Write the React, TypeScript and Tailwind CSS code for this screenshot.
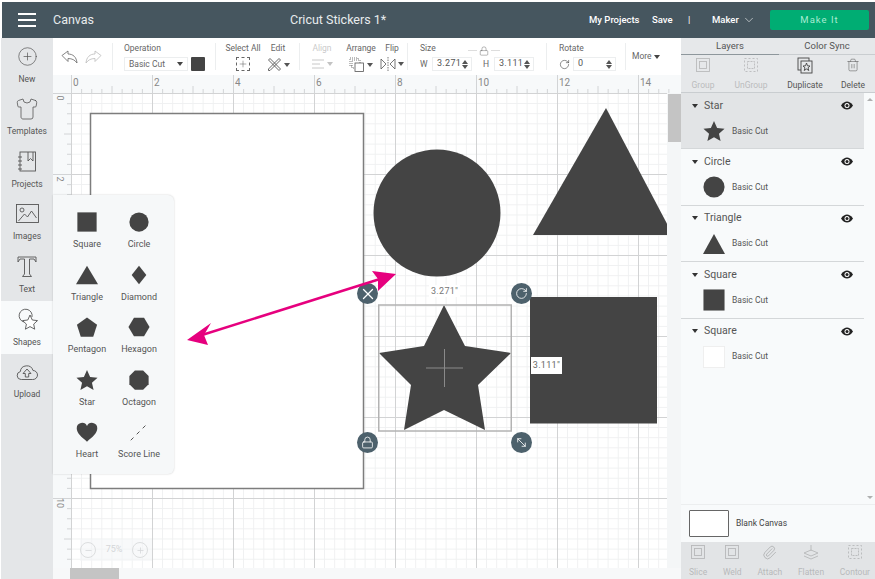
import { ChevronDown, CirclePlus, Paperclip, RotateCw, Trash2, X, Lock, MoveDiagonal2, Plus, Minus, Shirt } from 'lucide-react';
import type { ReactNode } from 'react';

const FONT = "font-['Roboto',sans-serif]";
const INK = '#444444';

function Glyph({ children, size = 22, fill = INK }: { children: ReactNode; size?: number; fill?: string }) {
  return (
    <svg width={size} height={size} viewBox="0 0 24 24" fill={fill}>
      {children}
    </svg>
  );
}

const STAR = '12,1 15.4,8.6 23.5,9.6 17.4,15 19.2,23 12,18.8 4.8,23 6.6,15 .5,9.6 8.6,8.6';

// Flyout shapes, in the order of the reference
const SHAPES: { label: string; art: ReactNode }[] = [
  { label: 'Square', art: <rect x="1.5" y="1.5" width="21" height="21" /> },
  { label: 'Circle', art: <circle cx="12" cy="12" r="10.5" /> },
  { label: 'Triangle', art: <polygon points="12,2 24,22 0,22" /> },
  { label: 'Diamond', art: <polygon points="12,2 20,12 12,22 4,12" /> },
  { label: 'Pentagon', art: <polygon points="12,1.5 23,9.5 18.8,22.5 5.2,22.5 1,9.5" /> },
  { label: 'Hexagon', art: <polygon points="6.5,2 17.5,2 23.5,12 17.5,22 6.5,22 .5,12" /> },
  { label: 'Star', art: <polygon points={STAR} /> },
  { label: 'Octagon', art: <polygon points="7.5,1.5 16.5,1.5 22.5,7.5 22.5,16.5 16.5,22.5 7.5,22.5 1.5,16.5 1.5,7.5" /> },
  { label: 'Heart', art: <path d="M12 22.5C6 17.5 .8 13.6.8 8A5.9 5.9 0 0 1 12 5.4 5.9 5.9 0 0 1 23.2 8c0 5.6-5.2 9.5-11.2 14.5z" /> },
  { label: 'Score Line', art: <path d="M3 21l3-3M9.5 14.5l3-3M16 8l3-3" stroke={INK} strokeWidth="1" fill="none" /> },
];

const LAYERS: { name: string; selected?: boolean; thumb: ReactNode }[] = [
  { name: 'Star', selected: true, thumb: <polygon points={STAR} /> },
  { name: 'Circle', thumb: <circle cx="12" cy="12" r="11.5" /> },
  { name: 'Triangle', thumb: <polygon points="12,1 24,23 0,23" /> },
  { name: 'Square', thumb: <rect x=".5" y=".5" width="23" height="23" /> },
  { name: 'Square', thumb: <rect x=".5" y=".5" width="23" height="23" fill="#ffffff" stroke="#eeeeee" /> },
];

function ProjectsIcon() {
  return (
    <svg width="20" height="22" viewBox="0 0 20 22" fill="none" stroke="#555" strokeWidth="0.9">
      <rect x="3" y="1" width="15.5" height="19" />
      <path d="M1 6h4M1 10h4M1 14h4M1 18h4M11 1v9l2.5-2.5L16 10V1" />
    </svg>
  );
}

function ImagesIcon() {
  return (
    <svg width="23" height="20" viewBox="0 0 23 20" fill="none" stroke="#555" strokeWidth="0.9">
      <rect x=".5" y=".5" width="22" height="18" />
      <circle cx="6" cy="6" r="2" />
      <path d="M2.500 17l6-7 3 3 4-6 5 7" />
    </svg>
  );
}

function TextIcon() {
  return (
    <svg width="20" height="22" viewBox="0 0 20 22" fill="none" stroke="#555" strokeWidth="0.9">
      <path d="M1 1h18v5l-2-3h-4.5v15l2 2.5h-9l2-2.5V3H3L1 6z" />
    </svg>
  );
}

function ShapesIcon() {
  return (
    <svg width="24" height="24" viewBox="0 0 24 24" fill="none" stroke="#555" strokeWidth="0.9">
      <path d="M9 14a6.5 6.5 0 1 1 8-5" />
      <path d="M15 7l2.300 5 5.200.6-3.800 3.500 1 5.100-4.700-2.600-4.600 2.600 1-5.100-3.800-3.500 5.200-.6z" fill="#fff" />
    </svg>
  );
}

function UploadIcon() {
  return (
    <svg width="22" height="17" viewBox="0 0 22 17" fill="none" stroke="#555" strokeWidth="0.9">
      <path d="M5.500 15.500H5a4 4 0 0 1-.7-7.900A6.500 6.500 0 0 1 17 6.500a4.500 4.500 0 0 1 0 9h-.5z" />
      <path d="M11 5l4 4.500h-2.300V13H9.300V9.500H7z" />
    </svg>
  );
}

const SIDEBAR: { label: string; icon: ReactNode; active?: boolean }[] = [
  { label: 'New', icon: <CirclePlus size={21} strokeWidth={0.8} color="#555" /> },
  { label: 'Templates', icon: <Shirt size={24} strokeWidth={0.8} color="#555" /> },
  { label: 'Projects', icon: <ProjectsIcon /> },
  { label: 'Images', icon: <ImagesIcon /> },
  { label: 'Text', icon: <TextIcon /> },
  { label: 'Shapes', icon: <ShapesIcon />, active: true },
  { label: 'Upload', icon: <UploadIcon /> },
];

function Sidebar() {
  return (
    <div className="w-[52px] ml-px shrink-0 bg-[#e4e6e8] flex flex-col">
      {SIDEBAR.map((item) => (
        <div
          key={item.label}
          className={`h-[52.6px] shrink-0 flex flex-col items-center justify-end pb-[6px] ${item.active ? 'bg-[#f8fafb]' : ''}`}
        >
          <div className="h-[26px] flex items-center justify-center">{item.icon}</div>
          <span className="text-[8.5px] leading-[12px] mt-[3px] text-[#555]">{item.label}</span>
        </div>
      ))}
    </div>
  );
}

function Header() {
  return (
    <div className="h-[36px] ml-[2px] bg-[#46565f] flex items-center text-white shrink-0 whitespace-nowrap">
      <div className="w-[18px] ml-[16px] flex flex-col gap-[4px]">
        <div className="h-[2px] bg-white" />
        <div className="h-[2px] bg-white" />
        <div className="h-[2px] bg-white" />
      </div>
      <span className="ml-[17px] w-[237px] text-[12.5px] text-[#e8ecee]">Canvas</span>
      <span className="w-[299px] text-[12.5px] text-[#e8ecee]">Cricut Stickers 1*</span>
      <span className="w-[63px] text-[9.5px] font-medium">My Projects</span>
      <span className="w-[36px] text-[9.5px] font-medium">Save</span>
      <span className="w-[24px] text-[9.5px]">|</span>
      <span className="w-[30px] text-[9.5px] font-medium">Maker</span>
      <span className="w-[28px]"><ChevronDown size={14} strokeWidth={1} /></span>
      <div className="w-[99px] h-[20px] rounded-[2px] bg-[#00ad73] flex items-center justify-center text-[9.5px] tracking-[1px] text-[#a8ecd2]">
        Make It
      </div>
    </div>
  );
}

function Caret({ color = '#555' }: { color?: string }) {
  return <span className="inline-block border-x-[3px] border-x-transparent border-t-[4px] ml-[2px]" style={{ borderTopColor: color }} />;
}

function Stepper() {
  return (
    <span className="flex flex-col gap-[1px] ml-auto mr-[3px]">
      <span className="border-x-[3px] border-x-transparent border-b-[4px] border-b-[#555]" />
      <span className="border-x-[3px] border-x-transparent border-t-[4px] border-t-[#555]" />
    </span>
  );
}

function Tool({ label, faded, width, children }: { label: string; faded?: boolean; width: string; children: ReactNode }) {
  return (
    <div className={`flex flex-col items-center ${width} ${faded ? 'opacity-35' : ''}`}>
      <span className="text-[8.5px] leading-[12px] -mt-[1px] text-[#666] whitespace-nowrap">{label}</span>
      <div className="h-[18px] mt-[3px] flex items-center">{children}</div>
    </div>
  );
}

function NumberField({ value, width }: { value: string; width: string }) {
  return (
    <div className={`${width} h-[14px] border border-[#eceeef] flex items-center pl-[4px] text-[9px] tracking-[.3px] text-[#555]`}>
      {value}
      <Stepper />
    </div>
  );
}

function Toolbar() {
  return (
    <div className="h-[37px] bg-white flex shrink-0 text-[#666]">
      <div className="w-[60px] my-[5px] border-r border-[#eceeef] flex items-center gap-[7px] pl-[8px]">
        <svg width="17" height="14" viewBox="0 0 17 14" fill="none" stroke="#666" strokeWidth="0.8">
          <path d="M1 5.5L7 1v3c5 0 8.5 3 9 9-2-3-5-4.5-9-4.5v3z" />
        </svg>
        <svg width="17" height="14" viewBox="0 0 17 14" fill="none" stroke="#bbb" strokeWidth="0.8">
          <path d="M16 5.5L10 1v3C5 4 1.5 7 1 13c2-3 5-4.5 9-4.5v3z" />
        </svg>
      </div>
      <div className="w-[103px] my-[5px] border-r border-[#eceeef] pl-[11px]">
        <div className="text-[8.5px] leading-[12px] -mt-[1px]">Operation</div>
        <div className="flex gap-[3px] mt-[3px]">
          <div className="w-[64px] h-[14px] border border-[#eceeef] flex items-center justify-between px-[4px] text-[8.5px]">
            Basic Cut
            <Caret color="#444" />
          </div>
          <div className="w-[14px] h-[14px] bg-[#444] rounded-[1px]" />
        </div>
      </div>
      <div className="w-[84px] my-[5px] border-r border-[#eceeef] flex pl-[9px]">
        <Tool label="Select All" width="w-[36px]">
          <div className="w-[14px] h-[14px] border border-dashed border-[#666] flex items-center justify-center text-[#555]">
            <Plus size={10} strokeWidth={1.2} />
          </div>
        </Tool>
        <Tool label="Edit" width="w-[34px]">
          <svg width="15" height="15" viewBox="0 0 15 15" fill="none" stroke="#555" strokeWidth="0.9">
            <path d="M3 1.500l10.500 10.500-1.500 1.500L1.500 3zM12 1.500L13.500 3 3 13.500H1.500V12z" />
          </svg>
          <Caret />
        </Tool>
      </div>
      <div className="w-[108px] my-[5px] border-r border-[#eceeef] flex pl-[2px]">
        <Tool label="Align" faded width="w-[40px]">
          <svg width="14" height="12" viewBox="0 0 14 12" stroke="#666" strokeWidth="1">
            <path d="M1 2h12M1 6h8M1 10h12" />
          </svg>
          <Caret />
        </Tool>
        <Tool label="Arrange" width="w-[38px]">
          <svg width="16" height="15" viewBox="0 0 16 15" fill="#fff" stroke="#555" strokeWidth="0.8">
            <rect x="1" y="1" width="8" height="8" strokeDasharray="1 1" />
            <rect x="3" y="3" width="8" height="8" strokeDasharray="1 1" />
            <rect x="6" y="6" width="8.5" height="8.5" />
          </svg>
          <Caret />
        </Tool>
        <Tool label="Flip" width="w-[24px]">
          <svg width="16" height="14" viewBox="0 0 16 14" fill="none" stroke="#555" strokeWidth="0.8">
            <path d="M1 2l5 5-5 5zM15 2l-5 5 5 5z" />
            <path d="M8 0v14" strokeDasharray="1.5 1" />
          </svg>
          <Caret />
        </Tool>
      </div>
      <div className="w-[139px] my-[5px] border-r border-[#eceeef] pl-[4px] relative">
        <div className="text-[8.5px] leading-[12px] -mt-[1px] pl-[8px]">Size</div>
        <Lock size={10} strokeWidth={1} color="#555" className="absolute left-[71px] top-[3px]" />
        <div className="absolute left-[60px] top-[7px] w-[9px] h-[1px] bg-[#ddd]" />
        <div className="absolute left-[83px] top-[7px] w-[9px] h-[1px] bg-[#ddd]" />
        <div className="flex items-center mt-[3px] text-[8.5px]">
          <span className="ml-[8px] w-[12px]">W</span>
          <NumberField value="3.271" width="w-[40px]" />
          <span className="ml-[11px] w-[11px]">H</span>
          <NumberField value="3.111" width="w-[40px]" />
        </div>
      </div>
      <div className="w-[79px] my-[5px] border-r border-[#eceeef] pl-[12px]">
        <div className="text-[8.5px] leading-[12px] -mt-[1px]">Rotate</div>
        <div className="flex items-center gap-[3px] mt-[3px]">
          <RotateCw size={11} strokeWidth={1.2} color="#333" />
          <NumberField value="0" width="w-[43px]" />
        </div>
      </div>
      <div className="flex-1 flex items-center pl-[6px] text-[8.5px]">
        More
        <Caret color="#444" />
      </div>
    </div>
  );
}

const COLUMN_MARKS = [0, 2, 4, 6, 8, 10, 12, 14];
const ROW_MARKS = [0, 2, 4, 6, 8, 10];

function TopRuler() {
  return (
    <div className="h-[18px] relative bg-[#f7f9fa] shrink-0 overflow-hidden">
      <svg className="absolute inset-0" width="628" height="18" stroke="#d2d4d6" strokeWidth="1">
        {Array.from({ length: 60 }, (_, i) => {
          const x = 18.5 + i * 10.125;
          const len = i % 8 === 0 ? 18 : i % 4 === 0 ? 7 : 4;
          return <line key={i} x1={x} x2={x} y1={18 - len} y2={18} />;
        })}
      </svg>
      {COLUMN_MARKS.map((n, i) => (
        <span key={n} className="absolute top-[2px] text-[10px] leading-[12px] text-[#888]" style={{ left: 20 + i * 81 }}>
          {n}
        </span>
      ))}
    </div>
  );
}

function LeftRuler() {
  return (
    <div className="w-[18px] relative bg-[#f7f9fa] shrink-0 overflow-hidden">
      <svg className="absolute inset-0" width="18" height="475" stroke="#d2d4d6" strokeWidth="1">
        {Array.from({ length: 48 }, (_, i) => {
          const y = 0.5 + i * 10.125;
          const len = i % 8 === 0 ? 18 : i % 4 === 0 ? 7 : 4;
          return <line key={i} y1={y} y2={y} x1={18 - len} x2={18} />;
        })}
      </svg>
      {ROW_MARKS.map((n, i) => (
        <span
          key={n}
          className="absolute left-[1px] w-[12px] h-[12px] text-center rotate-90 text-[9px] leading-[12px] text-[#888]"
          style={{ top: -1 + i * 81 }}
        >
          {n}
        </span>
      ))}
    </div>
  );
}

function Handle({ className, children }: { className: string; children: ReactNode }) {
  return (
    <div className={`absolute w-[21px] h-[21px] rounded-full bg-[#4d616c] flex items-center justify-center text-white ${className}`}>
      {children}
    </div>
  );
}

function CanvasArea() {
  return (
    <div className="flex-1 min-w-0 flex overflow-hidden">
      <LeftRuler />
      <div className="w-[596px] relative overflow-hidden bg-white bg-[linear-gradient(to_right,#d2d3d4_1px,transparent_1px),linear-gradient(to_bottom,#d2d3d4_1px,transparent_1px),linear-gradient(to_right,#eff0f1_1px,transparent_1px),linear-gradient(to_bottom,#eff0f1_1px,transparent_1px)] bg-[size:81px_81px,81px_81px,10.125px_10.125px,10.125px_10.125px]">
        <svg className="absolute inset-0" width="596" height="475" viewBox="71 93 596 475">
          <rect x="90.5" y="113.5" width="273" height="375" fill="#ffffff" stroke="#7d7d7d" strokeWidth="1.5" />
          <circle cx="437" cy="213" r="63.5" fill={INK} />
          <polygon points="606,108 673,235 533,235" fill={INK} />
          <rect x="530" y="297" width="127" height="126.5" fill={INK} />
          <polygon
            points="444,305 465,346 511,353 478,385 485,430 444,410 404,430 411,385 379,353 424,346"
            fill={INK}
          />
          <rect x="378.75" y="305" width="132.5" height="126" fill="none" stroke="#b3b3b3" strokeWidth="1.5" />
          <path d="M444.5 349v38M426 368h37" stroke="#8a8a8a" strokeWidth="1" />
        </svg>
        <div className="absolute left-[358px] top-[192px] text-[9px] leading-[12px] tracking-[.3px] bg-white px-[2px] text-[#777]">3.271"</div>
        <div className="absolute left-[460px] top-[264px] w-[31px] h-[17px] bg-white flex items-center justify-center text-[9px] tracking-[.3px] text-[#666]">3.111"</div>
        <Handle className="left-[286px] top-[190px]"><X size={18} strokeWidth={1.7} /></Handle>
        <Handle className="left-[440px] top-[190px]"><RotateCw size={13} strokeWidth={1.5} /></Handle>
        <Handle className="left-[286px] top-[339px]"><Lock size={13} strokeWidth={1.5} /></Handle>
        <Handle className="left-[440px] top-[339px]"><MoveDiagonal2 size={13} strokeWidth={1.5} /></Handle>
        <div className="absolute left-[9px] top-[446px] w-[72px] h-[22px] flex items-center gap-[3px] bg-[#f4f5f6]/60 text-[#d4d6d8]">
          <span className="w-[16px] h-[16px] rounded-full border border-[#dcdedf] flex items-center justify-center"><Minus size={9} /></span>
          <span className="text-[9px] w-[30px] text-center">75%</span>
          <span className="w-[16px] h-[16px] rounded-full border border-[#dcdedf] flex items-center justify-center"><Plus size={9} /></span>
        </div>
      </div>
      <div className="flex-1 bg-[#f4f6f7]">
        <div className="w-[13px] ml-px h-[48px] mt-[1px] bg-[#c4c4c4]" />
      </div>
    </div>
  );
}

function ShapesFlyout() {
  return (
    <div className="absolute left-[53px] top-[195px] w-[121px] h-[279px] rounded-r-[6px] bg-[#f6f8f9] shadow-[0_0_2px_rgba(0,0,0,.2)] grid grid-cols-[52px_52px] auto-rows-[52.5px] pl-[8px] pt-[16px]">
      {SHAPES.map((shape) => (
        <div key={shape.label} className="flex flex-col items-center">
          <Glyph>{shape.art}</Glyph>
          <span className="mt-[5px] text-[9px] leading-[12px] text-[#555] whitespace-nowrap">{shape.label}</span>
        </div>
      ))}
    </div>
  );
}

function Eye() {
  return (
    <svg width="12" height="9" viewBox="0 0 12 9">
      <path d="M0 4.5C2 1.5 4 .5 6 .5s4 1 6 4c-2 3-4 4-6 4s-4-1-6-4z" fill="#222" />
      <circle cx="6" cy="4.5" r="2.5" fill="#fff" />
      <circle cx="6" cy="4.5" r="1.5" fill="#222" />
    </svg>
  );
}

function LayerRow({ name, selected, last, thumb }: { name: string; selected?: boolean; last?: boolean; thumb: ReactNode }) {
  return (
    <div className={`h-[56.4px] shrink-0 pl-[9px] ${last ? '' : 'border-b border-[#d4d7d9]'} ${selected ? 'bg-[#e2e4e6]' : 'bg-[#f8fafb]'}`}>
      <div className="flex items-center h-[23px] pt-[2px]">
        <Caret color="#333" />
        <span className="ml-[6px] text-[10.5px] text-[#555]">{name}</span>
        <span className="ml-auto mr-[11px]"><Eye /></span>
      </div>
      <div className="flex items-center pl-[13px] mt-[4px]">
        <Glyph>{thumb}</Glyph>
        <span className="ml-[7px] text-[8.5px] text-[#555]">Basic Cut</span>
      </div>
    </div>
  );
}

function PanelTool({ label, faded, children, className = '' }: { label: string; faded?: boolean; children: ReactNode; className?: string }) {
  return (
    <div className={`flex flex-col items-center ${faded ? 'opacity-30' : ''} ${className}`}>
      <div className="h-[18px] flex items-center">{children}</div>
      <span className="mt-[6px] text-[8.5px] leading-[11px] text-[#555]">{label}</span>
    </div>
  );
}

function IconSquare({ dashed }: { dashed?: boolean }) {
  return (
    <svg width="16" height="16" viewBox="0 0 16 16" fill="none" stroke="#555" strokeWidth="0.9">
      <rect x="1.5" y="1.5" width="13" height="13" strokeDasharray={dashed ? '2 2' : undefined} />
      <rect x="4.5" y="4.5" width="7" height="7" strokeDasharray={dashed ? '2 1' : undefined} />
    </svg>
  );
}

function DuplicateIcon() {
  return (
    <svg width="16" height="17" viewBox="0 0 16 17" fill="none" stroke="#444" strokeWidth="0.9">
      <rect x="1" y="1" width="11" height="12" />
      <rect x="4" y="4" width="11" height="12" fill="#e6e8ea" />
      <polygon points="9.5,6 10.5,8.8 13,9 11,10.8 11.8,13.5 9.5,12 7.2,13.5 8,10.8 6,9 8.5,8.8" />
    </svg>
  );
}

function RightPanel() {
  return (
    <div className="flex-1 min-w-0 flex flex-col bg-[#f8fafb]">
      <div className="flex h-[17px] shrink-0 bg-[#e6e8ea] text-[9.5px] text-[#555] border-b border-[#c9cdd0]">
        <div className="w-[98px] flex items-center justify-center border-b border-[#8e979c] h-[17px]">Layers</div>
        <div className="flex-1 flex items-center justify-center">Color Sync</div>
      </div>
      <div className="h-[38px] shrink-0 bg-[#e6e8ea] flex pt-[1px] border-b border-[#c9cdd0]">
        <PanelTool label="Group" faded className="w-[44px]"><IconSquare /></PanelTool>
        <PanelTool label="UnGroup" faded className="w-[52px]"><IconSquare dashed /></PanelTool>
        <PanelTool label="Duplicate" className="w-[56px]"><DuplicateIcon /></PanelTool>
        <PanelTool label="Delete" className="w-[40px]"><Trash2 size={14} strokeWidth={0.9} color="#555" /></PanelTool>
      </div>
      <div className="flex-1 min-h-0 flex border-b border-[#eceeef]">
        <div className="w-[183px] flex flex-col">
          {LAYERS.map((layer, i) => (
            <LayerRow key={i} name={layer.name} selected={layer.selected} last={i === LAYERS.length - 1} thumb={layer.thumb} />
          ))}
        </div>
        <div className="flex-1 flex flex-col items-center justify-between py-[5px] opacity-50">
          <span className="border-x-[3px] border-x-transparent border-b-[3px] border-b-[#666]" />
          <span className="border-x-[3px] border-x-transparent border-t-[3px] border-t-[#666]" />
        </div>
      </div>
      <div className="h-[37px] shrink-0 flex items-center pl-[8px]">
        <div className="w-[40px] h-[27px] bg-white border border-[#666] rounded-[1px]" />
        <span className="ml-[7px] text-[8.5px] text-[#444]">Blank Canvas</span>
      </div>
      <div className="h-[37px] shrink-0 bg-[#e2e4e6] flex justify-between pl-[8px] pr-[5px] pt-[1px]">
        <PanelTool label="Slice" faded><IconSquare /></PanelTool>
        <PanelTool label="Weld" faded><IconSquare /></PanelTool>
        <PanelTool label="Attach" faded><Paperclip size={15} strokeWidth={1} /></PanelTool>
        <PanelTool label="Flatten" faded>
          <svg width="16" height="15" viewBox="0 0 16 15" fill="none" stroke="#555" strokeWidth="0.9">
            <path d="M1 8l7-3 7 3-7 3zM1 11l7 3 7-3M8 0v6" />
          </svg>
        </PanelTool>
        <PanelTool label="Contour" faded><IconSquare dashed /></PanelTool>
      </div>
    </div>
  );
}

export default function App() {
  return (
    <div className={`${FONT} relative w-[875px] h-[579px] overflow-hidden bg-white pt-[2px] flex flex-col`}>
      <Header />
      <div className="flex-1 min-h-0 flex">
        <Sidebar />
        <div className="w-[628px] shrink-0 flex flex-col">
          <Toolbar />
          <TopRuler />
          <CanvasArea />
          <div className="h-[11px] shrink-0 bg-[#f7f8f9] pl-[17px]">
            <div className="w-[49px] h-[11px] bg-[#c4c4c4]" />
          </div>
        </div>
        <RightPanel />
      </div>
      <ShapesFlyout />
      {/* Pink callout arrow */}
      <svg className="absolute inset-0 pointer-events-none" width="875" height="579">
        <line x1="202" y1="335" x2="380" y2="279" stroke="#e6007e" strokeWidth="2.5" />
        <polygon points="187,340 211,323 204,335 208,345" fill="#e6007e" />
        <polygon points="396,274 372,271 378,279 378,291" fill="#e6007e" />
      </svg>
    </div>
  );
}
